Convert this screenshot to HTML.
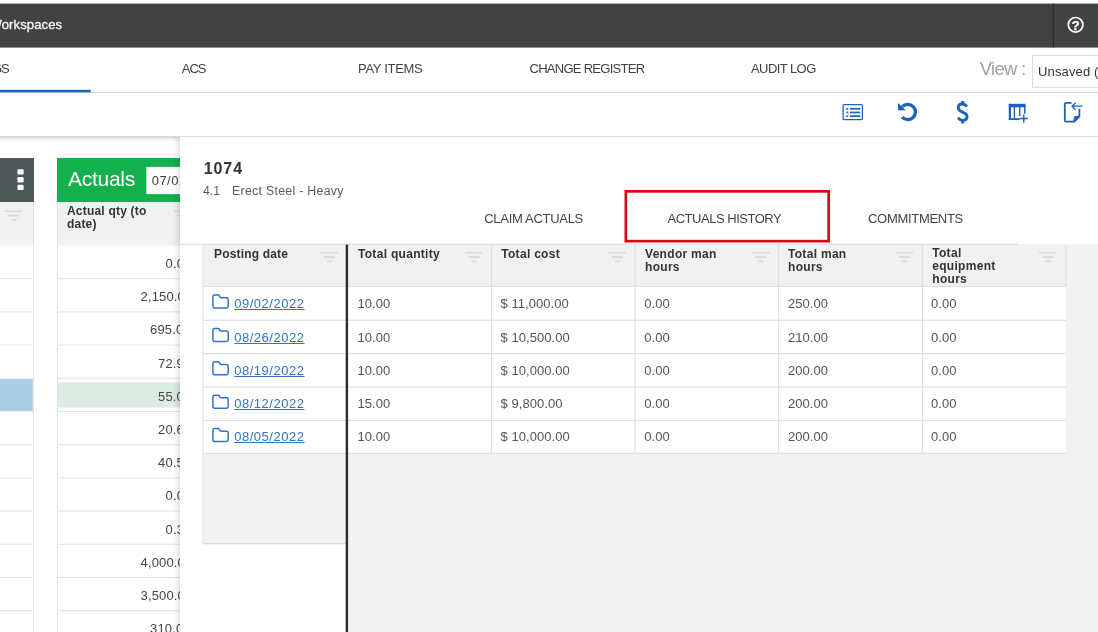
<!DOCTYPE html>
<html>
<head>
<meta charset="utf-8">
<title>Actuals History</title>
<style>
*{box-sizing:border-box;margin:0;padding:0}
html,body{width:1098px;height:632px;overflow:hidden;background:#fff}
body{font-family:"Liberation Sans",sans-serif;color:#444;position:relative}
#root{position:absolute;left:0;top:0;width:1098px;height:632px;overflow:hidden;will-change:transform}
.abs{position:absolute}
.t{position:absolute;white-space:pre;line-height:1}
.hline{position:absolute;height:1.1px;background:#e2e2e2}
.vline{position:absolute;width:1.1px;background:#dcdcdc}
#panel{left:180px;top:137.2px;width:918px;height:495px;background:#fff}
#pshadow{left:172px;top:137px;width:8px;height:495px;background:linear-gradient(to right,rgba(0,0,0,0),rgba(0,0,0,.03) 45%,rgba(0,0,0,.11))}
#tshadow{left:0;top:137px;width:180px;height:5px;background:linear-gradient(to bottom,rgba(0,0,0,.10),rgba(0,0,0,0))}
</style>
</head>
<body>
<div id="root">
<svg class="abs" style="left:0;top:0" width="1098" height="632" viewBox="0 0 1098 632"><rect x="0.00" y="3.60" width="1098.00" height="44.00" fill="#424242"/>
<rect x="1052.80" y="3.60" width="1.10" height="44.00" fill="#303030"/>
<rect x="0.00" y="92.00" width="1098.00" height="1.10" fill="#dcdcdc"/>
<rect x="0.00" y="89.80" width="90.70" height="2.50" fill="#1565c0"/>
<rect x="0.00" y="136.20" width="1098.00" height="1.10" fill="#d2d2d2"/>
<rect x="1032.5" y="55.5" width="80" height="31.8" fill="#fff" stroke="#dcdcdc" stroke-width="1"/>
<rect x="0.00" y="158.00" width="34.00" height="44.00" fill="#4e5758"/>
<rect x="17.40" y="169.20" width="6.20" height="5.40" fill="#fff" rx="1.2"/>
<rect x="17.40" y="177.00" width="6.20" height="5.40" fill="#fff" rx="1.2"/>
<rect x="17.40" y="184.70" width="6.20" height="5.40" fill="#fff" rx="1.2"/>
<rect x="0.00" y="202.00" width="33.50" height="43.50" fill="#f1f1f1"/>
<rect x="33.00" y="202.00" width="1.00" height="430.00" fill="#e4e4e4"/>
<rect x="5.00" y="210.40" width="17.50" height="1.60" fill="#d8d8d8"/><rect x="8.30" y="214.80" width="11.20" height="1.60" fill="#d8d8d8"/><rect x="11.50" y="219.10" width="5.00" height="1.60" fill="#d8d8d8"/>
<rect x="57.00" y="158.00" width="130.00" height="44.00" fill="#13b04e"/>
<rect x="146.30" y="166.90" width="50.00" height="27.20" fill="#fff"/>
<rect x="57.00" y="202.00" width="130.00" height="43.50" fill="#f1f1f1"/>
<rect x="57.00" y="202.00" width="1.00" height="430.00" fill="#e4e4e4"/>
<rect x="173.50" y="210.40" width="17.50" height="1.60" fill="#d8d8d8"/><rect x="176.80" y="214.80" width="11.20" height="1.60" fill="#d8d8d8"/><rect x="180.00" y="219.10" width="5.00" height="1.60" fill="#d8d8d8"/>
<rect x="0.00" y="378.60" width="33.00" height="32.90" fill="#c3dcf2"/>
<rect x="0.00" y="379.50" width="32.20" height="31.00" fill="#a9cde3"/>
<rect x="57.50" y="382.50" width="130.00" height="25.00" fill="#dcece2"/>
<rect x="0.00" y="278.20" width="33.00" height="1.00" fill="#e2e2e2"/>
<rect x="57.00" y="278.20" width="130.00" height="1.00" fill="#e2e2e2"/>
<rect x="0.00" y="311.40" width="33.00" height="1.00" fill="#e2e2e2"/>
<rect x="57.00" y="311.40" width="130.00" height="1.00" fill="#e2e2e2"/>
<rect x="0.00" y="344.60" width="33.00" height="1.00" fill="#e2e2e2"/>
<rect x="57.00" y="344.60" width="130.00" height="1.00" fill="#e2e2e2"/>
<rect x="57.00" y="377.80" width="130.00" height="1.00" fill="#e2e2e2"/>
<rect x="57.00" y="411.00" width="130.00" height="1.00" fill="#e2e2e2"/>
<rect x="0.00" y="444.20" width="33.00" height="1.00" fill="#e2e2e2"/>
<rect x="57.00" y="444.20" width="130.00" height="1.00" fill="#e2e2e2"/>
<rect x="0.00" y="477.40" width="33.00" height="1.00" fill="#e2e2e2"/>
<rect x="57.00" y="477.40" width="130.00" height="1.00" fill="#e2e2e2"/>
<rect x="0.00" y="510.60" width="33.00" height="1.00" fill="#e2e2e2"/>
<rect x="57.00" y="510.60" width="130.00" height="1.00" fill="#e2e2e2"/>
<rect x="0.00" y="543.80" width="33.00" height="1.00" fill="#e2e2e2"/>
<rect x="57.00" y="543.80" width="130.00" height="1.00" fill="#e2e2e2"/>
<rect x="0.00" y="577.00" width="33.00" height="1.00" fill="#e2e2e2"/>
<rect x="57.00" y="577.00" width="130.00" height="1.00" fill="#e2e2e2"/>
<rect x="0.00" y="610.20" width="33.00" height="1.00" fill="#e2e2e2"/>
<rect x="57.00" y="610.20" width="130.00" height="1.00" fill="#e2e2e2"/>
<rect x="0.00" y="643.40" width="33.00" height="1.00" fill="#e2e2e2"/>
<rect x="57.00" y="643.40" width="130.00" height="1.00" fill="#e2e2e2"/>
<rect x="843.1" y="104.5" width="19.3" height="15.2" rx="1" fill="none" stroke="#1a62c0" stroke-width="1.25"/>
<rect x="846.40" y="107.90" width="1.90" height="1.70" fill="#1a62c0"/>
<rect x="850.00" y="107.90" width="10.30" height="1.70" fill="#1a62c0"/>
<rect x="846.40" y="111.60" width="1.90" height="1.70" fill="#1a62c0"/>
<rect x="850.00" y="111.60" width="10.30" height="1.70" fill="#1a62c0"/>
<rect x="846.40" y="115.30" width="1.90" height="1.70" fill="#1a62c0"/>
<rect x="850.00" y="115.30" width="10.30" height="1.70" fill="#1a62c0"/>
<path d="M902.3 106.7 A7.65 7.65 0 1 1 902.16 117.17" fill="none" stroke="#1a62c0" stroke-width="3.3"/>
<path d="M898 103.1 L898 110.2 L905.8 110.2 Z" fill="#1a62c0"/>
<path d="M966.7 106.7 C965.7 104.7 964.1 104 962.4 104 C959.8 104 958.2 105.6 958.2 107.8 C958.2 110 959.6 111 962.6 112.2 C965.6 113.4 967 114.4 967 116.6 C967 118.8 965.4 120.4 962.8 120.4 C960.6 120.4 959.2 119.6 958.4 117.5" fill="none" stroke="#1a62c0" stroke-width="2.9"/>
<rect x="961.20" y="101.00" width="2.90" height="3.40" fill="#1a62c0"/>
<rect x="961.20" y="120.20" width="2.90" height="3.20" fill="#1a62c0"/>
<rect x="1008.80" y="103.80" width="16.70" height="3.50" fill="#1a62c0"/>
<rect x="1008.80" y="103.80" width="2.20" height="16.20" fill="#1a62c0"/>
<rect x="1008.80" y="118.20" width="10.80" height="1.80" fill="#1a62c0"/>
<rect x="1013.70" y="105.00" width="1.40" height="14.00" fill="#1a62c0"/>
<rect x="1019.00" y="105.00" width="1.40" height="11.00" fill="#1a62c0"/>
<rect x="1024.00" y="105.00" width="1.50" height="8.80" fill="#1a62c0"/>
<rect x="1019.60" y="117.80" width="8.30" height="1.50" fill="#1a62c0"/>
<rect x="1023.00" y="114.60" width="1.50" height="8.00" fill="#1a62c0"/>
<path d="M1071.6 102.8 H1066 Q1064.8 102.8 1064.8 104 V120.4 Q1064.8 121.6 1066 121.6 H1074.4 L1079.4 116.4 V108.8" fill="none" stroke="#1a62c0" stroke-width="1.8"/>
<path d="M1073.8 121.8 L1074.4 116.6 L1079.8 116 Z" fill="#1a62c0" stroke="#1a62c0" stroke-width="0.8"/>
<path d="M1071.9 106.2 H1082.4 M1075.6 102.8 L1072 106.2 L1075.6 109.7" fill="none" stroke="#1a62c0" stroke-width="1.25"/>
<circle cx="1075.6" cy="24.8" r="7.3" fill="none" stroke="#fff" stroke-width="1.7"/>
<text x="1075.5" y="30" font-family="Liberation Sans" font-size="13.4" font-weight="bold" fill="#fff" stroke="#fff" stroke-width=".25" text-anchor="middle">?</text></svg>
<div class="t" style="font-size:13px;color:#f4f4f4;letter-spacing:0.13px;-webkit-text-stroke:.35px #f4f4f4;left:-10.47px;top:17.75px;">Workspaces</div>
<div class="t" style="font-size:13px;color:#424242;letter-spacing:-1px;left:-8.00px;top:62.00px;">GS</div>
<div class="t" style="font-size:13px;color:#424242;letter-spacing:-0.995px;left:181.75px;top:62.00px;">ACS</div>
<div class="t" style="font-size:13px;color:#424242;letter-spacing:-0.299px;left:358.00px;top:62.00px;">PAY ITEMS</div>
<div class="t" style="font-size:13px;color:#424242;letter-spacing:-0.726px;left:529.50px;top:62.00px;">CHANGE REGISTER</div>
<div class="t" style="font-size:13px;color:#424242;letter-spacing:-0.572px;left:751.00px;top:62.00px;">AUDIT LOG</div>
<div class="t" style="font-size:18.5px;color:#9aa1a6;letter-spacing:-0.716px;left:979.75px;top:59.64px;">View :</div>
<div class="t" style="font-size:13px;color:#333;letter-spacing:0.139px;left:1038.00px;top:65.25px;">Unsaved (</div>
<div class="t" style="font-size:21px;color:#fff;letter-spacing:-0.268px;left:68.00px;top:168.22px;">Actuals</div>
<div class="t" style="font-size:13px;color:#444;letter-spacing:.45px;left:151.75px;top:174.00px;">07/01/2022</div>
<div class="t" style="font-size:12px;color:#333;font-weight:700;letter-spacing:.2px;left:67.00px;top:204.84px;">Actual qty (to</div>
<div class="t" style="font-size:12px;color:#333;font-weight:700;letter-spacing:.2px;left:67.00px;top:217.84px;">date)</div>
<div class="t" style="font-size:13px;color:#444;letter-spacing:.15px;left:165.50px;top:257.00px;">0.00</div>
<div class="t" style="font-size:13px;color:#444;letter-spacing:.15px;left:140.50px;top:290.20px;">2,150.00</div>
<div class="t" style="font-size:13px;color:#444;letter-spacing:.15px;left:150.00px;top:323.40px;">695.00</div>
<div class="t" style="font-size:13px;color:#444;letter-spacing:.15px;left:158.00px;top:356.60px;">72.90</div>
<div class="t" style="font-size:13px;color:#444;letter-spacing:.15px;left:158.00px;top:389.80px;">55.00</div>
<div class="t" style="font-size:13px;color:#444;letter-spacing:.15px;left:158.00px;top:423.00px;">20.60</div>
<div class="t" style="font-size:13px;color:#444;letter-spacing:.15px;left:158.00px;top:456.20px;">40.50</div>
<div class="t" style="font-size:13px;color:#444;letter-spacing:.15px;left:165.50px;top:489.40px;">0.00</div>
<div class="t" style="font-size:13px;color:#444;letter-spacing:.15px;left:165.50px;top:522.60px;">0.30</div>
<div class="t" style="font-size:13px;color:#444;letter-spacing:.15px;left:140.50px;top:555.80px;">4,000.00</div>
<div class="t" style="font-size:13px;color:#444;letter-spacing:.15px;left:140.50px;top:589.00px;">3,500.00</div>
<div class="t" style="font-size:13px;color:#444;letter-spacing:.15px;left:150.00px;top:622.20px;">310.00</div>
<div class="abs" id="tshadow"></div>
<div class="abs" id="pshadow"></div>
<div class="abs" id="panel"></div>
<svg class="abs" style="left:0;top:0" width="1098" height="632" viewBox="0 0 1098 632"><rect x="203.20" y="244.30" width="894.80" height="299.40" fill="#f2f2f2"/>
<rect x="346.00" y="543.00" width="752.00" height="90.00" fill="#f2f2f2"/>
<rect x="203.20" y="244.60" width="862.60" height="41.80" fill="#f1f1f1"/>
<rect x="203.20" y="286.40" width="862.60" height="166.90" fill="#fff"/>
<rect x="180.00" y="243.70" width="838.00" height="1.10" fill="#dcdcdc"/>
<rect x="203.20" y="285.85" width="862.60" height="1.10" fill="#dedede"/>
<rect x="203.20" y="319.73" width="862.60" height="1.10" fill="#dedede"/>
<rect x="203.20" y="353.11" width="862.60" height="1.10" fill="#dedede"/>
<rect x="203.20" y="386.49" width="862.60" height="1.10" fill="#dedede"/>
<rect x="203.20" y="419.87" width="862.60" height="1.10" fill="#dedede"/>
<rect x="203.20" y="452.75" width="862.60" height="1.10" fill="#dedede"/>
<rect x="203.20" y="543.10" width="143.00" height="1.20" fill="#d6d6d6"/>
<rect x="202.60" y="244.60" width="1.00" height="299.60" fill="#e2e2e2"/>
<rect x="490.95" y="244.60" width="1.10" height="208.70" fill="#dedede"/>
<rect x="634.45" y="244.60" width="1.10" height="208.70" fill="#dedede"/>
<rect x="778.05" y="244.60" width="1.10" height="208.70" fill="#dedede"/>
<rect x="921.85" y="244.60" width="1.10" height="208.70" fill="#dedede"/>
<rect x="1065.30" y="244.60" width="1.10" height="41.80" fill="#dedede"/>
<rect x="345.70" y="244.60" width="2.40" height="388.00" fill="#2c2c2c"/>
<rect x="320.50" y="251.90" width="17.50" height="1.60" fill="#d8d8d8"/><rect x="323.80" y="256.30" width="11.20" height="1.60" fill="#d8d8d8"/><rect x="327.00" y="260.60" width="5.00" height="1.60" fill="#d8d8d8"/>
<rect x="465.00" y="251.90" width="17.50" height="1.60" fill="#d8d8d8"/><rect x="468.30" y="256.30" width="11.20" height="1.60" fill="#d8d8d8"/><rect x="471.50" y="260.60" width="5.00" height="1.60" fill="#d8d8d8"/>
<rect x="608.50" y="251.90" width="17.50" height="1.60" fill="#d8d8d8"/><rect x="611.80" y="256.30" width="11.20" height="1.60" fill="#d8d8d8"/><rect x="615.00" y="260.60" width="5.00" height="1.60" fill="#d8d8d8"/>
<rect x="752.00" y="251.90" width="17.50" height="1.60" fill="#d8d8d8"/><rect x="755.30" y="256.30" width="11.20" height="1.60" fill="#d8d8d8"/><rect x="758.50" y="260.60" width="5.00" height="1.60" fill="#d8d8d8"/>
<rect x="895.50" y="251.90" width="17.50" height="1.60" fill="#d8d8d8"/><rect x="898.80" y="256.30" width="11.20" height="1.60" fill="#d8d8d8"/><rect x="902.00" y="260.60" width="5.00" height="1.60" fill="#d8d8d8"/>
<rect x="1039.20" y="251.90" width="17.50" height="1.60" fill="#d8d8d8"/><rect x="1042.50" y="256.30" width="11.20" height="1.60" fill="#d8d8d8"/><rect x="1045.70" y="260.60" width="5.00" height="1.60" fill="#d8d8d8"/>
<path transform="translate(212.1,294.30)" d="M2.4 0.75 H6 Q6.8 0.75 7.2 1.5 L7.7 2.5 Q8 3.4 9 3.4 H14.4 Q16.1 3.4 16.1 5.1 V12 Q16.1 13.7 14.4 13.7 H2.5 Q0.8 13.7 0.8 12 V2.4 Q0.8 0.75 2.4 0.75 Z" fill="none" stroke="#2f74c6" stroke-width="1.5" stroke-linejoin="round"/>
<path transform="translate(212.1,327.68)" d="M2.4 0.75 H6 Q6.8 0.75 7.2 1.5 L7.7 2.5 Q8 3.4 9 3.4 H14.4 Q16.1 3.4 16.1 5.1 V12 Q16.1 13.7 14.4 13.7 H2.5 Q0.8 13.7 0.8 12 V2.4 Q0.8 0.75 2.4 0.75 Z" fill="none" stroke="#2f74c6" stroke-width="1.5" stroke-linejoin="round"/>
<path transform="translate(212.1,361.06)" d="M2.4 0.75 H6 Q6.8 0.75 7.2 1.5 L7.7 2.5 Q8 3.4 9 3.4 H14.4 Q16.1 3.4 16.1 5.1 V12 Q16.1 13.7 14.4 13.7 H2.5 Q0.8 13.7 0.8 12 V2.4 Q0.8 0.75 2.4 0.75 Z" fill="none" stroke="#2f74c6" stroke-width="1.5" stroke-linejoin="round"/>
<path transform="translate(212.1,394.44)" d="M2.4 0.75 H6 Q6.8 0.75 7.2 1.5 L7.7 2.5 Q8 3.4 9 3.4 H14.4 Q16.1 3.4 16.1 5.1 V12 Q16.1 13.7 14.4 13.7 H2.5 Q0.8 13.7 0.8 12 V2.4 Q0.8 0.75 2.4 0.75 Z" fill="none" stroke="#2f74c6" stroke-width="1.5" stroke-linejoin="round"/>
<path transform="translate(212.1,427.82)" d="M2.4 0.75 H6 Q6.8 0.75 7.2 1.5 L7.7 2.5 Q8 3.4 9 3.4 H14.4 Q16.1 3.4 16.1 5.1 V12 Q16.1 13.7 14.4 13.7 H2.5 Q0.8 13.7 0.8 12 V2.4 Q0.8 0.75 2.4 0.75 Z" fill="none" stroke="#2f74c6" stroke-width="1.5" stroke-linejoin="round"/>
<rect x="625.85" y="191.35" width="202.8" height="49.8" fill="none" stroke="#db0515" stroke-width="2.7"/></svg>
<div class="t" style="font-size:16px;color:#333;font-weight:700;letter-spacing:0.914px;left:203.75px;top:161.21px;">1074</div>
<div class="t" style="font-size:12.3px;color:#5c5c5c;left:203.00px;top:184.99px;">4.1</div>
<div class="t" style="font-size:12.3px;color:#5c5c5c;letter-spacing:0.306px;left:232.00px;top:184.99px;">Erect Steel - Heavy</div>
<div class="t" style="font-size:13px;color:#444;letter-spacing:-0.296px;left:484.25px;top:212.00px;">CLAIM ACTUALS</div>
<div class="t" style="font-size:13px;color:#444;letter-spacing:-0.476px;left:667.50px;top:212.00px;">ACTUALS HISTORY</div>
<div class="t" style="font-size:13px;color:#444;letter-spacing:-0.293px;left:868.00px;top:212.00px;">COMMITMENTS</div>
<div class="t" style="font-size:12px;color:#333;font-weight:700;letter-spacing:0.165px;left:214.00px;top:247.84px;">Posting date</div>
<div class="t" style="font-size:12px;color:#333;font-weight:700;letter-spacing:0.301px;left:358.00px;top:247.84px;">Total quantity</div>
<div class="t" style="font-size:12px;color:#333;font-weight:700;letter-spacing:0.297px;left:501.25px;top:247.84px;">Total cost</div>
<div class="t" style="font-size:12px;color:#333;font-weight:700;letter-spacing:.3px;left:645.00px;top:247.84px;">Vendor man</div>
<div class="t" style="font-size:12px;color:#333;font-weight:700;letter-spacing:.3px;left:645.00px;top:260.84px;">hours</div>
<div class="t" style="font-size:12px;color:#333;font-weight:700;letter-spacing:.3px;left:788.00px;top:247.84px;">Total man</div>
<div class="t" style="font-size:12px;color:#333;font-weight:700;letter-spacing:.3px;left:788.00px;top:260.84px;">hours</div>
<div class="t" style="font-size:12px;color:#333;font-weight:700;letter-spacing:.3px;left:932.25px;top:246.84px;">Total</div>
<div class="t" style="font-size:12px;color:#333;font-weight:700;letter-spacing:.3px;left:932.25px;top:259.84px;">equipment</div>
<div class="t" style="font-size:12px;color:#333;font-weight:700;letter-spacing:.3px;left:932.25px;top:272.84px;">hours</div>
<div class="t" style="font-size:13px;color:#2f74c6;letter-spacing:0.517px;text-decoration:underline;text-underline-offset:.8px;text-decoration-thickness:1px;left:234.25px;top:297.00px;">09/02/2022</div>
<div class="t" style="font-size:13px;color:#555;letter-spacing:.05px;left:357.50px;top:297.00px;">10.00</div>
<div class="t" style="font-size:13px;color:#555;letter-spacing:.05px;left:500.50px;top:297.00px;">$ 11,000.00</div>
<div class="t" style="font-size:13px;color:#555;letter-spacing:.05px;left:644.25px;top:297.00px;">0.00</div>
<div class="t" style="font-size:13px;color:#555;letter-spacing:.05px;left:788.00px;top:297.00px;">250.00</div>
<div class="t" style="font-size:13px;color:#555;letter-spacing:.05px;left:931.00px;top:297.00px;">0.00</div>
<div class="t" style="font-size:13px;color:#2f74c6;letter-spacing:0.517px;text-decoration:underline;text-underline-offset:.8px;text-decoration-thickness:1px;left:234.25px;top:331.00px;">08/26/2022</div>
<div class="t" style="font-size:13px;color:#555;letter-spacing:.05px;left:357.50px;top:331.00px;">10.00</div>
<div class="t" style="font-size:13px;color:#555;letter-spacing:.05px;left:500.50px;top:331.00px;">$ 10,500.00</div>
<div class="t" style="font-size:13px;color:#555;letter-spacing:.05px;left:644.25px;top:331.00px;">0.00</div>
<div class="t" style="font-size:13px;color:#555;letter-spacing:.05px;left:788.00px;top:331.00px;">210.00</div>
<div class="t" style="font-size:13px;color:#555;letter-spacing:.05px;left:931.00px;top:331.00px;">0.00</div>
<div class="t" style="font-size:13px;color:#2f74c6;letter-spacing:0.517px;text-decoration:underline;text-underline-offset:.8px;text-decoration-thickness:1px;left:234.25px;top:364.00px;">08/19/2022</div>
<div class="t" style="font-size:13px;color:#555;letter-spacing:.05px;left:357.50px;top:364.00px;">10.00</div>
<div class="t" style="font-size:13px;color:#555;letter-spacing:.05px;left:500.50px;top:364.00px;">$ 10,000.00</div>
<div class="t" style="font-size:13px;color:#555;letter-spacing:.05px;left:644.25px;top:364.00px;">0.00</div>
<div class="t" style="font-size:13px;color:#555;letter-spacing:.05px;left:788.00px;top:364.00px;">200.00</div>
<div class="t" style="font-size:13px;color:#555;letter-spacing:.05px;left:931.00px;top:364.00px;">0.00</div>
<div class="t" style="font-size:13px;color:#2f74c6;letter-spacing:0.517px;text-decoration:underline;text-underline-offset:.8px;text-decoration-thickness:1px;left:234.25px;top:397.00px;">08/12/2022</div>
<div class="t" style="font-size:13px;color:#555;letter-spacing:.05px;left:357.50px;top:397.00px;">15.00</div>
<div class="t" style="font-size:13px;color:#555;letter-spacing:.05px;left:500.50px;top:397.00px;">$ 9,800.00</div>
<div class="t" style="font-size:13px;color:#555;letter-spacing:.05px;left:644.25px;top:397.00px;">0.00</div>
<div class="t" style="font-size:13px;color:#555;letter-spacing:.05px;left:788.00px;top:397.00px;">200.00</div>
<div class="t" style="font-size:13px;color:#555;letter-spacing:.05px;left:931.00px;top:397.00px;">0.00</div>
<div class="t" style="font-size:13px;color:#2f74c6;letter-spacing:0.517px;text-decoration:underline;text-underline-offset:.8px;text-decoration-thickness:1px;left:234.25px;top:430.00px;">08/05/2022</div>
<div class="t" style="font-size:13px;color:#555;letter-spacing:.05px;left:357.50px;top:430.00px;">10.00</div>
<div class="t" style="font-size:13px;color:#555;letter-spacing:.05px;left:500.50px;top:430.00px;">$ 10,000.00</div>
<div class="t" style="font-size:13px;color:#555;letter-spacing:.05px;left:644.25px;top:430.00px;">0.00</div>
<div class="t" style="font-size:13px;color:#555;letter-spacing:.05px;left:788.00px;top:430.00px;">200.00</div>
<div class="t" style="font-size:13px;color:#555;letter-spacing:.05px;left:931.00px;top:430.00px;">0.00</div>
</div>
</body>
</html>
